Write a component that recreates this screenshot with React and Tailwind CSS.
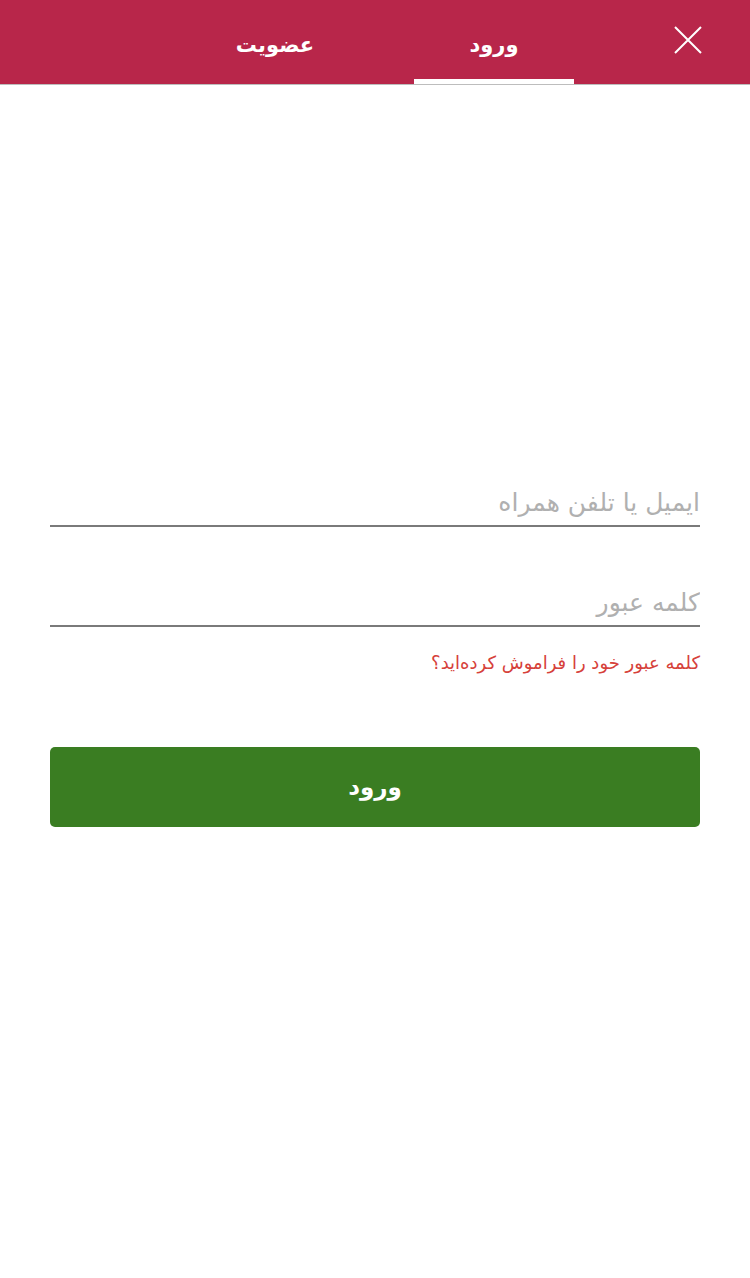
import React from 'react';

const fa = { fontFamily: '"DejaVu Sans", "Noto Sans", sans-serif' };

function CloseIcon() {
    return (
        <svg width="30" height="30" viewBox="0 0 30 30" fill="none">
            <path d="M2 2 L28 28 M28 2 L2 28" stroke="white" strokeWidth="2" />
        </svg>
    );
}

export default function App() {
    return (
        <div dir="rtl" className="w-[750px] h-[1278px] bg-white" style={fa}>
            <header className="h-[85px] bg-[#b8264a] border-b border-[#bdbdbd] flex items-stretch">
                <div className="w-[176px] flex items-start justify-start pr-[47px] pt-[25px]">
                    <CloseIcon />
                </div>
                <div className="w-[160px] relative flex items-center justify-center">
                    <span className="text-white text-[21px] font-bold pt-2">ورود</span>
                    <div className="absolute bottom-0 left-0 right-0 h-[5px] bg-white" />
                </div>
                <div className="w-[278px] flex items-center justify-center">
                    <span className="text-white text-[21px] font-bold pt-2">عضویت</span>
                </div>
                <div className="flex-1" />
            </header>

            <div className="px-[50px] pt-[395px]">
                <div className="border-b-2 border-[#7a7a7a] h-[47px] flex items-end">
                    <input
                        className="w-full outline-none text-[25px] text-[#333] placeholder:text-[#b0b0b0] pb-1 bg-transparent"
                        style={fa}
                        placeholder="ایمیل یا تلفن همراه"
                    />
                </div>
                <div className="border-b-2 border-[#7a7a7a] h-[47px] mt-[53px] flex items-end">
                    <input
                        type="password"
                        className="w-full outline-none text-[25px] text-[#333] placeholder:text-[#b0b0b0] pb-1 bg-transparent"
                        style={fa}
                        placeholder="کلمه عبور"
                    />
                </div>
                <p className="mt-[22px] text-[18px] text-[#d6413a]">کلمه عبور خود را فراموش کرده‌اید؟</p>
                <button
                    className="mt-[71px] w-full h-[80px] rounded-[5px] bg-[#3a7d22] text-white text-[23px] font-bold"
                    style={fa}
                >
                    ورود
                </button>
            </div>
        </div>
    );
}
